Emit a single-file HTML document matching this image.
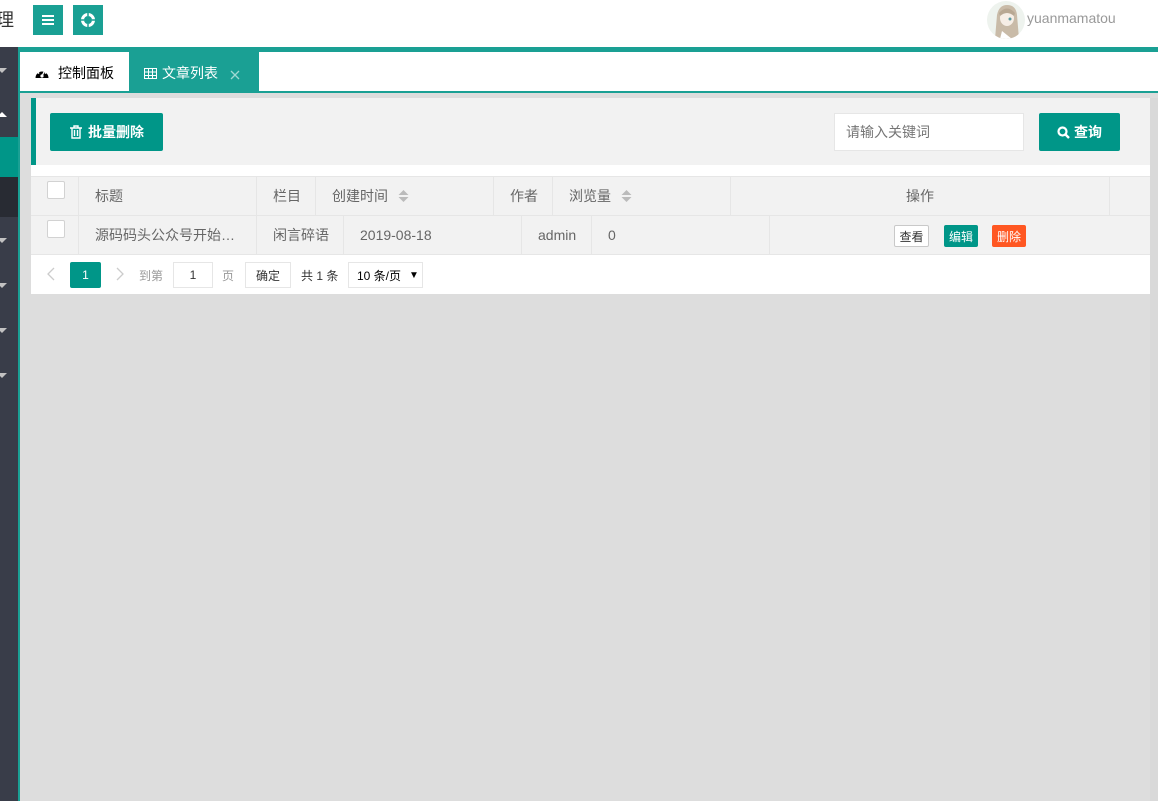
<!DOCTYPE html>
<html><head><meta charset="utf-8">
<style>
*{margin:0;padding:0;box-sizing:border-box}
body{width:1158px;height:801px;overflow:hidden;background:#ddd;font-family:"Liberation Sans","Noto Sans CJK SC",sans-serif;font-size:14px;color:#666;position:relative}
.abs{position:absolute}
.hdr{left:0;top:0;width:1158px;height:47px;background:#fff}
.sq{width:30px;height:30px;top:5px;background:#1aa094}
.side{left:0;top:47px;width:18px;height:754px;background:#393d49}
.tri{position:absolute;left:0;width:0;height:0;border-left:5px solid transparent;border-right:5px solid transparent}
.th,.td{position:absolute;top:0;height:100%;border-right:1px solid #e6e6e6;display:flex;align-items:center;padding-left:16px}
.cb{width:18px;height:18px;border:1px solid #d2d2d2;background:#fff;border-radius:2px;position:absolute;left:16px;top:4px}
.btn{position:absolute;top:225px;height:22px;width:35px;font-size:12px;display:flex;align-items:center;justify-content:center;border-radius:2px}
.sort{margin-left:10px}
</style></head><body>
<div class="abs hdr"></div>
<div class="abs" style="left:-4px;top:6px;font-size:18px;color:#333">理</div>
<div class="abs sq" style="left:33px"><svg width="30" height="30"><rect x="9" y="10" width="12" height="2" fill="#fff"/><rect x="9" y="14" width="12" height="2" fill="#fff"/><rect x="9" y="18" width="12" height="2" fill="#fff"/></svg></div>
<div class="abs sq" style="left:73px"><svg width="30" height="30"><circle cx="15" cy="15" r="5.5" fill="none" stroke="#fff" stroke-width="3"/><path d="M15 8V11M15 19V22M8 15H11M19 15H22" stroke="#1aa094" stroke-width="1.5"/></svg></div>
<div class="abs" style="left:987px;top:1px;width:38px;height:38px;border-radius:50%;overflow:hidden;background:#eef3ee">
<svg width="38" height="38"><path d="M8 38L10 14Q12 4 20 4Q29 4 30 14L32 38Z" fill="#c9bba8"/><ellipse cx="20" cy="17" rx="7" ry="8" fill="#f6eee6"/><path d="M12 12Q20 3 28 12L27 15Q20 9 13 15Z" fill="#b8a893"/><circle cx="23" cy="18" r="1.5" fill="#5a9aa0"/><path d="M15 30L25 38H13Z" fill="#fff"/></svg></div>
<div class="abs" style="left:1027px;top:10px;color:#999;font-size:14px">yuanmamatou</div>
<div class="abs" style="left:18px;top:47px;width:1140px;height:5px;background:#1aa094"></div>
<div class="abs side"></div>
<div class="abs" style="left:18px;top:47px;width:2px;height:754px;background:#1aa094"></div>
<div class="abs" style="left:0;top:137px;width:18px;height:40px;background:#009688"></div>
<div class="abs" style="left:0;top:177px;width:18px;height:40px;background:#282b33"></div>
<div class="tri" style="top:68px;border-top:5px solid #c2c2c2;left:-3px"></div>
<div class="tri" style="top:112px;border-bottom:5px solid #fff;left:-3px"></div>
<div class="tri" style="top:238px;border-top:5px solid #c2c2c2;left:-3px"></div>
<div class="tri" style="top:283px;border-top:5px solid #c2c2c2;left:-3px"></div>
<div class="tri" style="top:328px;border-top:5px solid #c2c2c2;left:-3px"></div>
<div class="tri" style="top:373px;border-top:5px solid #c2c2c2;left:-3px"></div>
<div class="abs" style="left:20px;top:52px;width:1138px;height:40px;background:#fff"></div>
<div class="abs" style="left:20px;top:91px;width:1138px;height:2px;background:#1aa094"></div>
<div class="abs" style="left:129px;top:52px;width:130px;height:40px;background:#1aa094"></div>
<div class="abs" style="left:35px;top:66px"><svg width="14" height="12"><path d="M0.5 11A6.5 6.5 0 1 1 13.5 11Z" fill="#000"/><circle cx="7" cy="9" r="1.6" fill="#fff"/><path d="M7 9L9.5 4" stroke="#fff" stroke-width="1.3"/><circle cx="3.5" cy="6" r=".9" fill="#fff"/><circle cx="10.5" cy="6" r=".9" fill="#fff"/></svg></div>
<div class="abs" style="left:58px;top:63px;color:#000">控制面板</div>
<div class="abs" style="left:144px;top:66px"><svg width="13" height="11"><rect x=".5" y=".5" width="12" height="10" fill="none" stroke="#fff"/><path d="M0.5 4H12.5M0.5 7.5H12.5M4.5 .5V10.5M8.5 .5V10.5" stroke="#fff"/></svg></div>
<div class="abs" style="left:162px;top:63px;color:#fff">文章列表</div>
<div class="abs" style="left:230px;top:67px"><svg width="10" height="10"><path d="M1 1L9 9M9 1L1 9" stroke="#9fd8d2" stroke-width="1.3"/></svg></div>
<div class="abs" style="left:1150px;top:98px;width:8px;height:703px;background:#d9d9d9"></div>
<div class="abs" style="left:31px;top:98px;width:1119px;height:196px;background:#fff"></div>
<div class="abs" style="left:31px;top:98px;width:1119px;height:67px;background:#f2f2f2;border-left:5px solid #009688"></div>
<div class="abs" style="left:50px;top:113px;width:113px;height:38px;background:#009688;border-radius:2px;color:#fff;display:flex;align-items:center;justify-content:center;font-weight:bold"><svg width="14" height="14" style="margin-right:5px"><path d="M1 3H13M5 3V1H9V3M3 3V13H11V3M5.5 5V11M8.5 5V11" stroke="#fff" stroke-width="1.4" fill="none"/></svg>批量删除</div>
<div class="abs" style="left:834px;top:113px;width:190px;height:38px;background:#fff;border:1px solid #e6e6e6;padding-left:11px;line-height:36px;color:#757575">请输入关键词</div>
<div class="abs" style="left:1039px;top:113px;width:81px;height:38px;background:#009688;border-radius:2px;color:#fff;display:flex;align-items:center;justify-content:center;font-weight:bold"><svg width="13" height="13" style="margin-right:4px"><circle cx="5.5" cy="5.5" r="4" stroke="#fff" stroke-width="2.2" fill="none"/><path d="M8.5 8.5L12 12" stroke="#fff" stroke-width="2.4"/></svg>查询</div>
<div class="abs" style="left:31px;top:176px;width:1119px;height:40px;background:#f2f2f2;border-top:1px solid #e6e6e6;border-bottom:1px solid #e6e6e6">
<div class="th" style="left:0;width:48px"><div class="cb"></div></div>
<div class="th" style="left:48px;width:178px">标题</div>
<div class="th" style="left:226px;width:59px">栏目</div>
<div class="th" style="left:285px;width:178px">创建时间<svg class="sort" width="11" height="14"><path d="M0.5 6L5.5 1L10.5 6Z M0.5 8L5.5 13L10.5 8Z" fill="#bbb"/></svg></div>
<div class="th" style="left:463px;width:59px">作者</div>
<div class="th" style="left:522px;width:178px">浏览量<svg class="sort" width="11" height="14"><path d="M0.5 6L5.5 1L10.5 6Z M0.5 8L5.5 13L10.5 8Z" fill="#bbb"/></svg></div>
<div class="th" style="left:700px;width:379px;justify-content:center;padding:0">操作</div>
</div>
<div class="abs" style="left:31px;top:216px;width:1119px;height:39px;background:#f2f2f2;border-bottom:1px solid #e6e6e6">
<div class="td" style="left:0;width:48px"><div class="cb"></div></div>
<div class="td" style="left:48px;width:178px">源码码头公众号开始…</div>
<div class="td" style="left:226px;width:87px">闲言碎语</div>
<div class="td" style="left:313px;width:178px">2019-08-18</div>
<div class="td" style="left:491px;width:70px">admin</div>
<div class="td" style="left:561px;width:178px">0</div>
</div>
<div class="btn" style="left:894px;background:#fff;border:1px solid #c9c9c9;color:#333">查看</div>
<div class="btn" style="left:944px;width:34px;background:#009688;color:#fff">编辑</div>
<div class="btn" style="left:992px;width:34px;background:#ff5722;color:#fff">删除</div>
<div class="abs" style="left:47px;top:267px"><svg width="8" height="14"><path d="M7 1L1 7L7 13" stroke="#ccc" stroke-width="1.3" fill="none"/></svg></div>
<div class="abs" style="left:70px;top:262px;width:31px;height:26px;background:#009688;color:#fff;font-size:12px;display:flex;align-items:center;justify-content:center;border-radius:2px">1</div>
<div class="abs" style="left:116px;top:267px"><svg width="8" height="14"><path d="M1 1L7 7L1 13" stroke="#ccc" stroke-width="1.3" fill="none"/></svg></div>
<div class="abs" style="left:139px;top:267px;color:#999;font-size:12px">到第</div>
<div class="abs" style="left:173px;top:262px;width:40px;height:26px;border:1px solid #e6e6e6;font-size:12px;display:flex;align-items:center;justify-content:center;color:#333">1</div>
<div class="abs" style="left:222px;top:267px;color:#999;font-size:12px">页</div>
<div class="abs" style="left:245px;top:262px;width:46px;height:26px;border:1px solid #e6e6e6;font-size:12px;display:flex;align-items:center;justify-content:center;color:#333">确定</div>
<div class="abs" style="left:301px;top:267px;color:#333;font-size:12px">共 1 条</div>
<div class="abs" style="left:348px;top:262px;width:75px;height:26px;border:1px solid #e6e6e6;font-size:12px;display:flex;align-items:center;padding-left:8px;color:#000">10 条/页<span style="margin-left:8px;font-size:10px">▼</span></div>
</body></html>
